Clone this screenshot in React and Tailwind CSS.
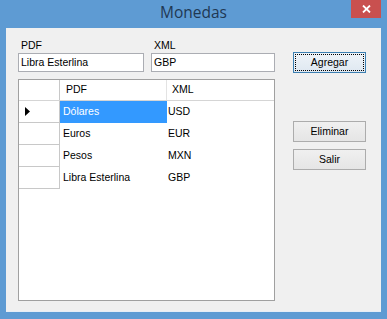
import React from 'react';

const rows = [
    { pdf: 'Dólares', xml: 'USD', current: true },
    { pdf: 'Euros', xml: 'EUR' },
    { pdf: 'Pesos', xml: 'MXN' },
    { pdf: 'Libra Esterlina', xml: 'GBP' },
];

const font = { fontFamily: '"Liberation Sans", Arial, sans-serif' };

const WinButton = ({ children, focused }) => (
    <button
        className={
            focused
                ? 'w-[73px] h-[21px] border border-[#3c7fb1] bg-gradient-to-b from-[#eef3f8] to-[#dfe8f1] p-[1px] text-[10.5px] text-black leading-none'
                : 'w-[73px] h-[21px] border border-[#acacac] bg-gradient-to-b from-[#f0f0f0] to-[#e5e5e5] text-[10.5px] text-black leading-none'
        }
    >
        {focused ? (
            <span className="flex h-full w-full items-center justify-center border border-dotted border-black">
                {children}
            </span>
        ) : (
            children
        )}
    </button>
);

const App = () => {
    return (
        <div className="w-[387px] h-[319px] bg-[#5e9bd3] flex flex-col overflow-hidden" style={font}>
            {/* title bar */}
            <div className="h-[28px] relative flex items-center justify-center">
                <span
                    className="text-[15.5px] text-[#1f3853] -mt-[3px]"
                    style={{ fontFamily: '"Open Sans", "Noto Sans", sans-serif' }}
                >
                    Monedas
                </span>
                <div className="absolute right-[6px] top-0 w-[30px] h-[18px] bg-[#c9504f] flex items-center justify-center">
                    <svg width="9" height="8" viewBox="0 0 9 8">
                        <path d="M1 0.5 L8 7.5 M8 0.5 L1 7.5" stroke="white" strokeWidth="1.8" />
                    </svg>
                </div>
            </div>

            {/* client area */}
            <div className="flex-1 mx-[6px] mb-[7px] bg-[#f0f0f0] border-b border-[#e6eef6] flex pl-[12px] pt-[10px]">
                <div className="w-[257px] flex flex-col">
                    <div className="flex gap-[7px]">
                        <div className="w-[126px] flex flex-col">
                            <label className="text-[10.5px] text-black pl-[3px] h-[15px] leading-[15px]">PDF</label>
                            <div className="h-[19px] bg-white border border-[#abadb3] text-[10.5px] pl-[2px] flex items-center">
                                Libra Esterlina
                            </div>
                        </div>
                        <div className="w-[124px] flex flex-col">
                            <label className="text-[10.5px] text-black pl-[3px] h-[15px] leading-[15px]">XML</label>
                            <div className="h-[19px] bg-white border border-[#abadb3] text-[10.5px] pl-[2px] flex items-center">
                                GBP
                            </div>
                        </div>
                    </div>

                    {/* grid */}
                    <div className="mt-[7px] h-[222px] bg-white border border-[#a0a0a0] text-[10.5px] text-black">
                        <div className="flex h-[21px] border-b border-[#d5d5d5]">
                            <div className="w-[41px] border-r border-[#c8c8c8]"></div>
                            <div className="w-[107px] border-r border-[#e3e3e3] pl-[6px] flex items-center">PDF</div>
                            <div className="flex-1 pl-[5px] flex items-center">XML</div>
                        </div>
                        {rows.map((r) => (
                            <div key={r.xml} className="flex h-[22px]">
                                <div className="w-[41px] border-r border-b border-[#c8c8c8] flex items-center pl-[6px]">
                                    {r.current && (
                                        <svg width="5" height="9" viewBox="0 0 5 9">
                                            <path d="M0 0 L5 4.5 L0 9 Z" fill="black" />
                                        </svg>
                                    )}
                                </div>
                                <div
                                    className={
                                        r.current
                                            ? 'w-[107px] bg-[#3399ff] text-white pl-[3px] flex items-center'
                                            : 'w-[107px] pl-[3px] flex items-center'
                                    }
                                >
                                    {r.pdf}
                                </div>
                                <div className="flex-1 pl-[1px] flex items-center">{r.xml}</div>
                            </div>
                        ))}
                    </div>
                </div>

                {/* buttons */}
                <div className="ml-[18px] flex flex-col pt-[14px]">
                    <WinButton focused>Agregar</WinButton>
                    <div className="mt-[48px] flex flex-col gap-[7px]">
                        <WinButton>Eliminar</WinButton>
                        <WinButton>Salir</WinButton>
                    </div>
                </div>
            </div>
        </div>
    );
};

export default App;
